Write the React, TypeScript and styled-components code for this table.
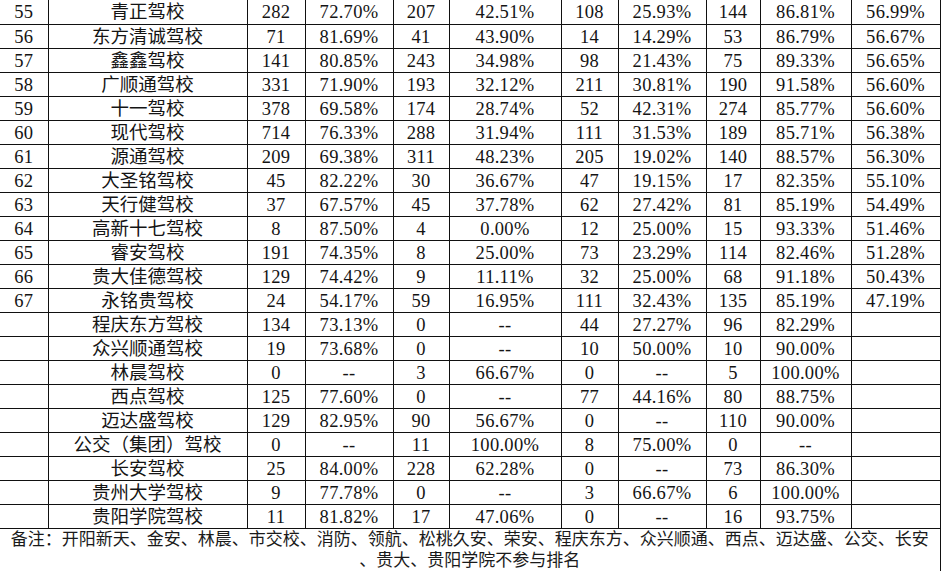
import React from "react";
import styled, { createGlobalStyle } from "styled-components";

const Global = createGlobalStyle`
  html, body { margin: 0; padding: 0; background: #ffffff; }
  body { font-family: "Liberation Serif", "Noto Sans CJK SC", serif; color: #141414; }
`;

const Sheet = styled.table`
  width: 940px;
  table-layout: fixed;
  border-collapse: collapse;
  font-family: "Liberation Serif", "Noto Sans CJK SC", serif;
  font-size: 18.5px;
  color: #141414;
`;

const Row = styled.tr`
  height: 24px;
  &:first-child td { border-top: none; }
`;

const Cell = styled.td<{ $name?: boolean }>`
  border: 1px solid #111;
  padding: 2px 0 0 0;
  text-align: center;
  vertical-align: middle;
  white-space: nowrap;
  overflow: hidden;
  line-height: 21px;
  letter-spacing: ${(p) => (p.$name ? "0" : "0.3px")};
  &:first-child { border-left: none; }
`;

const NoteCell = styled.td`
  border: 1px solid #111;
  border-left: none;
  padding: 0 0 1px 0;
  text-align: center;
  vertical-align: top;
  font-family: "Liberation Sans", "Noto Sans CJK SC", sans-serif;
  font-size: 17px;
  line-height: 21px;
  color: #1a1a1a;
`;

const NoteLine = styled.div`
  display: block;
  height: 21px;
  white-space: nowrap;
`;

const widths = [48, 199, 58, 88, 56, 112, 57, 88, 54, 91, 89];

type R = [string, string, string, string, string, string, string, string, string, string, string];

const rows: R[] = [
  ["55", "青正驾校", "282", "72.70%", "207", "42.51%", "108", "25.93%", "144", "86.81%", "56.99%"],
  ["56", "东方清诚驾校", "71", "81.69%", "41", "43.90%", "14", "14.29%", "53", "86.79%", "56.67%"],
  ["57", "鑫鑫驾校", "141", "80.85%", "243", "34.98%", "98", "21.43%", "75", "89.33%", "56.65%"],
  ["58", "广顺通驾校", "331", "71.90%", "193", "32.12%", "211", "30.81%", "190", "91.58%", "56.60%"],
  ["59", "十一驾校", "378", "69.58%", "174", "28.74%", "52", "42.31%", "274", "85.77%", "56.60%"],
  ["60", "现代驾校", "714", "76.33%", "288", "31.94%", "111", "31.53%", "189", "85.71%", "56.38%"],
  ["61", "源通驾校", "209", "69.38%", "311", "48.23%", "205", "19.02%", "140", "88.57%", "56.30%"],
  ["62", "大圣铭驾校", "45", "82.22%", "30", "36.67%", "47", "19.15%", "17", "82.35%", "55.10%"],
  ["63", "天行健驾校", "37", "67.57%", "45", "37.78%", "62", "27.42%", "81", "85.19%", "54.49%"],
  ["64", "高新十七驾校", "8", "87.50%", "4", "0.00%", "12", "25.00%", "15", "93.33%", "51.46%"],
  ["65", "睿安驾校", "191", "74.35%", "8", "25.00%", "73", "23.29%", "114", "82.46%", "51.28%"],
  ["66", "贵大佳德驾校", "129", "74.42%", "9", "11.11%", "32", "25.00%", "68", "91.18%", "50.43%"],
  ["67", "永铭贵驾校", "24", "54.17%", "59", "16.95%", "111", "32.43%", "135", "85.19%", "47.19%"],
  ["", "程庆东方驾校", "134", "73.13%", "0", "--", "44", "27.27%", "96", "82.29%", ""],
  ["", "众兴顺通驾校", "19", "73.68%", "0", "--", "10", "50.00%", "10", "90.00%", ""],
  ["", "林晨驾校", "0", "--", "3", "66.67%", "0", "--", "5", "100.00%", ""],
  ["", "西点驾校", "125", "77.60%", "0", "--", "77", "44.16%", "80", "88.75%", ""],
  ["", "迈达盛驾校", "129", "82.95%", "90", "56.67%", "0", "--", "110", "90.00%", ""],
  ["", "公交（集团）驾校", "0", "--", "11", "100.00%", "8", "75.00%", "0", "--", ""],
  ["", "长安驾校", "25", "84.00%", "228", "62.28%", "0", "--", "73", "86.30%", ""],
  ["", "贵州大学驾校", "9", "77.78%", "0", "--", "3", "66.67%", "6", "100.00%", ""],
  ["", "贵阳学院驾校", "11", "81.82%", "17", "47.06%", "0", "--", "16", "93.75%", ""],
];

export default function App() {
  return (
    <>
      <Global />
      <Sheet>
        <colgroup>
          {widths.map((w, i) => (
            <col key={i} style={{ width: w }} />
          ))}
        </colgroup>
        <tbody>
          {rows.map((r, i) => (
            <Row key={i}>
              {r.map((v, j) => (
                <Cell key={j} $name={j === 1}>
                  {v}
                </Cell>
              ))}
            </Row>
          ))}
          <tr>
            <NoteCell colSpan={11}>
              <NoteLine>
                备注：开阳新天、金安、林晨、市交校、消防、领航、松桃久安、荣安、程庆东方、众兴顺通、西点、迈达盛、公交、长安
              </NoteLine>
              <NoteLine>、贵大、贵阳学院不参与排名</NoteLine>
            </NoteCell>
          </tr>
        </tbody>
      </Sheet>
    </>
  );
}
